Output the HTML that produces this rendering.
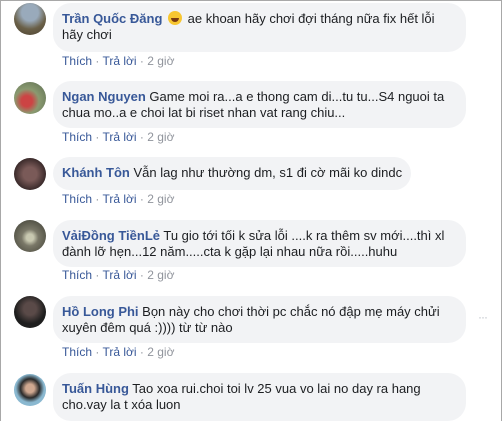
<!DOCTYPE html>
<html><head><meta charset="utf-8"><style>
body{margin:0;width:502px;height:420px;overflow:hidden;background:#fff;font-family:"Liberation Sans",sans-serif;}
.frame{position:absolute;left:0;top:0;width:500px;height:420px;border:1px solid #a8a8a8;border-bottom:none;}
.av{position:absolute;left:14px;width:32px;height:32px;border-radius:50%;}
.b{position:absolute;left:53px;background:#f2f3f5;border-radius:18px;padding:8px 10px 8px 9px;font-size:13px;line-height:16px;color:#1c1e21;white-space:nowrap;box-sizing:border-box;}
.n{color:#385898;font-weight:bold;}
.a{position:absolute;left:62px;font-size:12px;line-height:16px;color:#385898;}
.a span{color:#90949c;}
.emo{display:inline-block;width:14px;height:14px;border-radius:50%;background:#f7c631;vertical-align:-2px;position:relative;margin:0 2px;}
.emo:after{content:"";position:absolute;left:3px;top:7px;width:8px;height:4px;background:#7a3a10;border-radius:0 0 5px 5px;}
</style></head><body>
<div class="frame"></div>

<div class="av" style="top:3px;background:radial-gradient(circle at 50% 30%,#9ab 0 30%,#6a6048 60%,#4a4030);"></div>
<div class="b" style="top:3px;width:413px;height:49px;"><span class="n">Trần Quốc Đăng</span> <span class="emo"></span> ae khoan hãy chơi đợi tháng nữa fix hết lỗi<br>hãy chơi</div>
<div class="a" style="top:53px;">Thích <span>·</span> Trả lời <span>· 2 giờ</span></div>

<div class="av" style="top:82px;background:radial-gradient(circle at 40% 60%,#c44 0 20%,#8a9a70 45%,#5a6a50);"></div>
<div class="b" style="top:81px;width:413px;height:47px;"><span class="n">Ngan Nguyen</span> Game moi ra...a e thong cam di...tu tu...S4 nguoi ta<br>chua mo..a e choi lat bi riset nhan vat rang chiu...</div>
<div class="a" style="top:129px;">Thích <span>·</span> Trả lời <span>· 2 giờ</span></div>

<div class="av" style="top:158px;background:radial-gradient(circle at 50% 50%,#7a5a58 0 30%,#3a2a2a 70%);"></div>
<div class="b" style="top:157px;width:358px;height:33px;"><span class="n">Khánh Tôn</span> Vẫn lag như thường dm, s1 đi cờ mãi ko dindc</div>
<div class="a" style="top:191px;">Thích <span>·</span> Trả lời <span>· 2 giờ</span></div>

<div class="av" style="top:220px;background:radial-gradient(circle at 50% 55%,#c8c8b0 0 15%,#7a7868 35%,#3a3a30);"></div>
<div class="b" style="top:220px;width:413px;height:47px;"><span class="n">VảiĐồng TiềnLẻ</span> Tu gio tới tối k sửa lỗi ....k ra thêm sv mới....thì xl<br>đành lỡ hẹn...12 năm.....cta k gặp lại nhau nữa rồi.....huhu</div>
<div class="a" style="top:267px;">Thích <span>·</span> Trả lời <span>· 2 giờ</span></div>

<div class="av" style="top:296px;background:radial-gradient(circle at 50% 40%,#5a4a48 0 25%,#1e1e1e 60%);"></div>
<div class="b" style="top:296px;width:413px;height:47px;"><span class="n">Hồ Long Phi</span> Bọn này cho chơi thời pc chắc nó đập mẹ máy chửi<br>xuyên đêm quá :)))) từ từ nào</div>
<div style="position:absolute;left:478px;top:310px;font-size:12px;color:#bec3c9;letter-spacing:-1px;">···</div>
<div class="a" style="top:344px;">Thích <span>·</span> Trả lời <span>· 2 giờ</span></div>

<div class="av" style="top:374px;background:radial-gradient(circle at 50% 45%,#d0a890 0 18%,#2a2a2a 40%,#8ab8d0 60%);"></div>
<div class="b" style="top:373px;width:413px;height:48px;"><span class="n">Tuấn Hùng</span> Tao xoa rui.choi toi lv 25 vua vo lai no day ra hang<br>cho.vay la t xóa luon</div>
</body></html>
